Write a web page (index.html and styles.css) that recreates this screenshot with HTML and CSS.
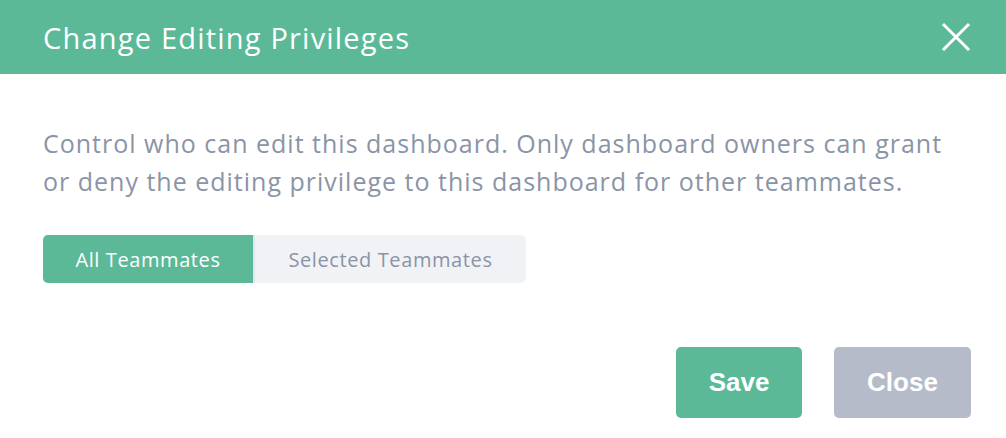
FILE: index.html
```html
<!DOCTYPE html>
<html>
<head>
<meta charset="utf-8">
<link rel="stylesheet" href="styles.css">
</head>
<body>
<div class="modal">
  <header class="modal-header">
    <h1 class="modal-title">Change Editing Privileges</h1>
    <button class="modal-x" aria-label="Close">
      <svg width="30" height="30" viewBox="0 0 30 30"><path d="M2 2L28 28M28 2L2 28" stroke="#fff" stroke-width="3" fill="none"/></svg>
    </button>
  </header>
  <div class="modal-body">
    <p class="desc">Control who can edit this dashboard. Only dashboard owners can grant or deny the editing privilege to this dashboard for other teammates.</p>
    <div class="toggle">
      <span class="seg seg-active">All Teammates</span>
      <span class="seg">Selected Teammates</span>
    </div>
  </div>
  <footer class="modal-footer">
    <button class="btn btn-save">Save</button>
    <button class="btn btn-close">Close</button>
  </footer>
</div>
</body>
</html>
```
FILE: styles.css
```css
* { box-sizing: border-box; }
html, body { margin: 0; padding: 0; background: #fff; }
body { font-family: "Open Sans", "Liberation Sans", sans-serif; width: 1006px; height: 438px; overflow: hidden; }
.modal { display: flex; flex-direction: column; height: 438px; }
.modal-header {
  height: 74px; background: #5bb998; display: flex; align-items: center;
  justify-content: space-between; padding: 0 35px 0 43px;
}
.modal-title { margin: 0; font-weight: 400; font-size: 29px; color: #fff; letter-spacing: 1.2px; }
.modal-x { background: none; border: none; padding: 0; width: 30px; height: 30px; display: flex; }
.modal-body { padding: 0 43px; }
.desc { margin: 50px 0 0; font-size: 25px; letter-spacing: 1px; line-height: 38px; color: #8a94a6; width: 920px; }
.toggle { display: flex; margin-top: 35px; width: 483px; height: 48px; border-radius: 5px; overflow: hidden; background: #f1f2f6; }
.seg { display: flex; align-items: center; justify-content: center; font-size: 20px; letter-spacing: 0.6px; color: #8a94a6; flex: 1; }
.seg-active { flex: 0 0 212px; background: #5bb998; color: #fff; border-right: 2px solid #e3e6ee; }
.modal-footer { display: flex; justify-content: flex-end; gap: 32px; padding: 0 35px 0 0; margin-top: 64px; }
.btn { border: none; border-radius: 5px; height: 71px; font-family: "Liberation Sans", Arial, sans-serif; font-weight: 700; font-size: 26px; color: #fff; }
.btn-save { width: 126px; background: #5bb998; }
.btn-close { width: 137px; background: #b5bbc9; }
```
